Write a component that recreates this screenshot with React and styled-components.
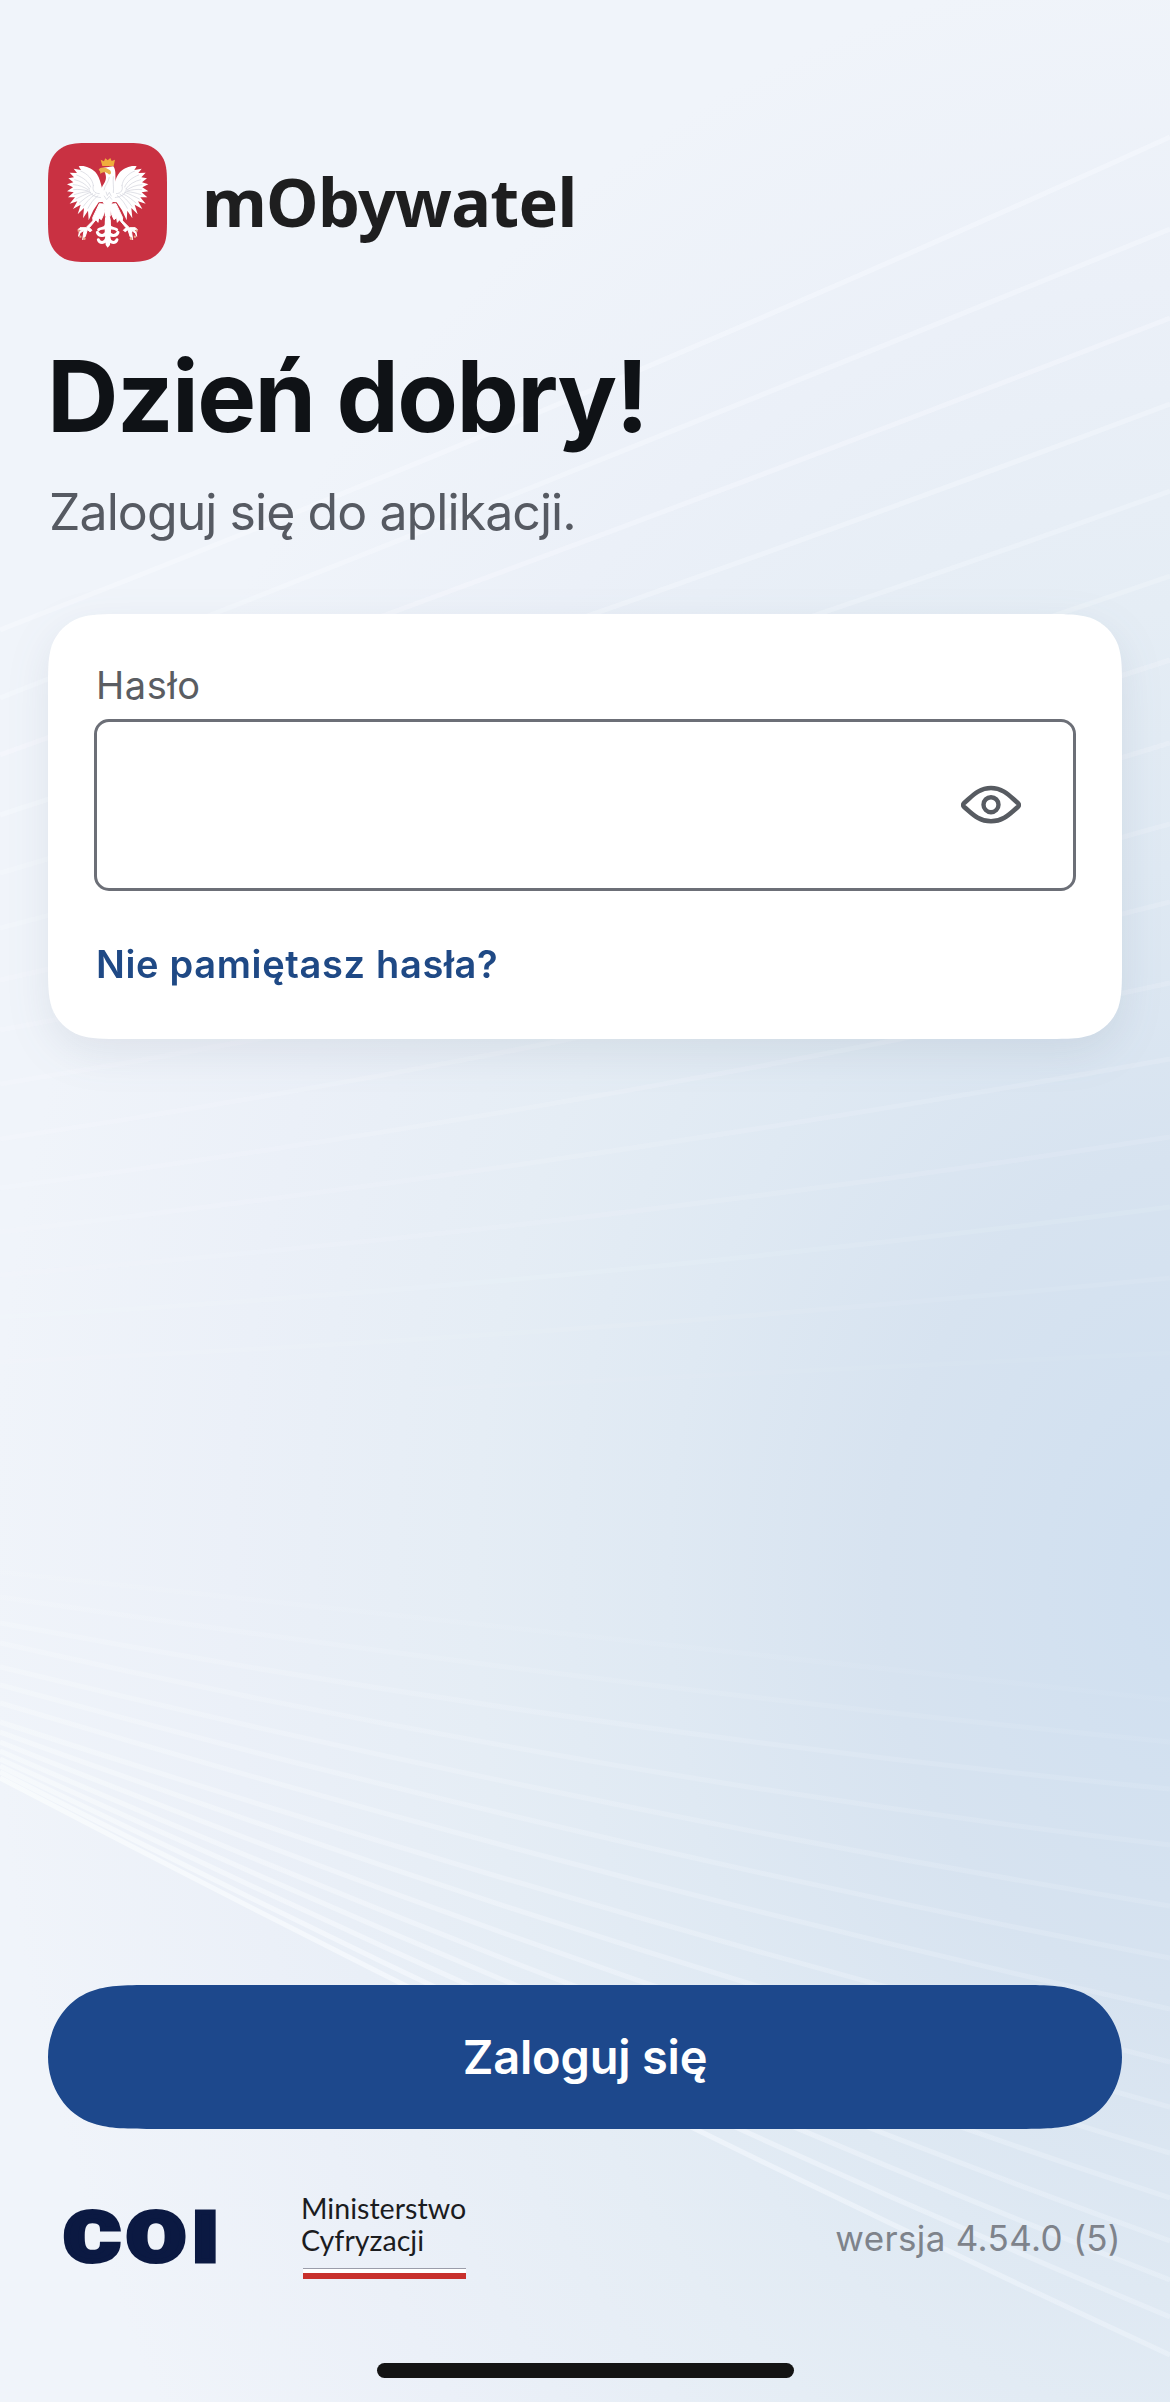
import React, { useState } from "react";
import styled, { createGlobalStyle } from "styled-components";

const GlobalStyle = createGlobalStyle`
  *, *::before, *::after { box-sizing: border-box; }
  body { margin: 0; background: #eef3fa; font-family: Inter, "Liberation Sans", sans-serif; }
`;

const Screen = styled.main`
  position: relative;
  isolation: isolate;
  display: flex;
  flex-direction: column;
  width: 1170px;
  height: 2402px;
  padding: 143px 48px 0;
  overflow: hidden;
  background: radial-gradient(
    1210px 1620px at 1200px 1580px,
    #cfdff0 0%,
    #d7e3f0 26%,
    #dfe9f3 44%,
    #e5edf5 60%,
    #ebf0f8 80%,
    #f0f4fa 100%
  );
`;

const Rays = styled.svg`
  position: absolute;
  inset: 0;
  z-index: -1;
  width: 1170px;
  height: 2402px;
`;

const Brand = styled.header`
  display: flex;
  align-items: center;
  gap: 35px;
  height: 119px;
`;

const Emblem = styled.svg`
  flex: none;
  width: 119px;
  height: 119px;
`;

const BrandName = styled.span`
  font: 700 66.5px/119px "Noto Sans", sans-serif;
  letter-spacing: -0.75px;
  color: #1e1e1f;
  margin-top: -3px;
`;

const Title = styled.h1`
  margin: 74px 0 0 -1px;
  font-size: 99px;
  font-weight: 700;
  line-height: 120px;
  letter-spacing: -1.6px;
  color: #0f1216;
`;

const Subtitle = styled.p`
  margin: 26px 0 0 1px;
  font-size: 50px;
  line-height: 60px;
  letter-spacing: -0.93px;
  color: #565a62;
`;

const CardShadow = styled.div`
  margin-top: 72px;
  filter: drop-shadow(0 14px 20px rgba(70, 85, 110, 0.1));
`;

const Card = styled.form`
  display: flex;
  flex-direction: column;
  height: 425px;
  padding: 48px 46px 0;
  background: #fff;
  clip-path: path("${(() => smoothCard(1074, 425, 50))()}");
`;

const Label = styled.label`
  margin-left: 2px;
  font-size: 38px;
  line-height: 46px;
  letter-spacing: 0.6px;
  color: #5a5d62;
`;

const Field = styled.div`
  display: flex;
  align-items: center;
  height: 172px;
  margin-top: 11px;
  padding: 0 52px 0 36px;
  border: 3px solid #6c6f77;
  border-radius: 15px;
`;

const PasswordInput = styled.input`
  flex: 1;
  min-width: 0;
  height: 100%;
  border: 0;
  outline: 0;
  background: transparent;
  font: 48px Inter, sans-serif;
  color: #0f1216;
`;

const IconButton = styled.button`
  display: flex;
  padding: 0;
  border: 0;
  background: none;
  color: #575b61;
`;

const ForgotLink = styled.a`
  align-self: flex-start;
  margin: 50px 0 0 2px;
  font-size: 38px;
  font-weight: 600;
  line-height: 46px;
  letter-spacing: 0.66px;
  color: #1f4985;
  text-decoration: none;
`;

const LoginButton = styled.button`
  flex: none;
  height: 144px;
  margin-top: auto;
  padding: 0;
  border: 0;
  background: #1d488c;
  clip-path: path("M110,0 H964 C996,0 1012,0 1028.5,5.4 C1056,14 1074,42 1074,72 C1074,102 1056,130 1028.5,138.6 C1012,144 996,144 964,144 H110 C78,144 62,144 45.5,138.6 C18,130 0,102 0,72 C0,42 18,14 45.5,5.4 C62,0 78,0 110,0 Z");
  font: 600 47px/56px Inter, sans-serif;
  letter-spacing: -0.2px;
  color: #fff;
`;

const Footer = styled.footer`
  display: flex;
  align-items: flex-start;
  height: 234px;
  padding-top: 62px;
`;

const CoiLogo = styled.span`
  flex: none;
  width: 152px;
  margin: 10px 0 0 16px;
  font: 900 69px/73px Roboto, sans-serif;
  letter-spacing: 5.8px;
  color: #0b1942;
  -webkit-text-stroke: 5px #0b1942;
  transform: scaleX(1.23);
  transform-origin: left center;
`;

const Ministry = styled.div`
  display: flex;
  flex-direction: column;
  margin-left: 85px;
  padding-top: 1px;
  font: 400 28.6px/32px Lato, sans-serif;
  color: #1b1c1f;
`;

const Flag = styled.div`
  width: 163px;
  height: 11px;
  margin: 12px 0 0 2px;
  border-top: 1px solid #9b9daa;
  border-bottom: 6px solid #c8302c;
  background: #fff;
`;

const Version = styled.span`
  margin: 25px 1px 0 auto;
  font-size: 35px;
  line-height: 44px;
  letter-spacing: 0.35px;
  color: #7e838b;
`;

const HomeIndicator = styled.div`
  flex: none;
  align-self: center;
  width: 417px;
  height: 15px;
  margin-bottom: 24px;
  border-radius: 8px;
  background: #141414;
`;

// Rounded rectangle with continuous-curvature corners.
function smoothCard(w, h, r) {
  const a = 1.5287 * r, b = 1.0885 * r, c = 0.8684 * r, d = 0.6315 * r;
  const e = 0.0749 * r, f = 0.3728 * r, g = 0.1691 * r;
  return [
    `M${a},0 H${w - a}`,
    `C${w - b},0 ${w - c},0 ${w - d},${e}`,
    `C${w - f},${g} ${w - g},${f} ${w - e},${d}`,
    `C${w},${c} ${w},${b} ${w},${a}`,
    `V${h - a}`,
    `C${w},${h - b} ${w},${h - c} ${w - e},${h - d}`,
    `C${w - g},${h - f} ${w - f},${h - g} ${w - d},${h - e}`,
    `C${w - c},${h} ${w - b},${h} ${w - a},${h}`,
    `H${a}`,
    `C${b},${h} ${c},${h} ${d},${h - e}`,
    `C${f},${h - g} ${g},${h - f} ${e},${h - d}`,
    `C0,${h - c} 0,${h - b} 0,${h - a}`,
    `V${a}`,
    `C0,${b} 0,${c} ${e},${d}`,
    `C${g},${f} ${f},${g} ${d},${e}`,
    `C${c},0 ${b},0 ${a},0 Z`,
  ].join(" ");
}

// Each ray: height at the left edge, the centre and the right edge, then opacity.
const upperRays = [
  [630, 393, 137, 0.45], [698, 466, 229, 0.42], [755, 541, 318, 0.38],
  [815, 617, 404, 0.34], [873, 692, 491, 0.3], [928, 765, 576, 0.27],
  [980, 836, 660, 0.24], [1030, 905, 743, 0.22], [1084, 972, 824, 0.2],
  [1139, 1036, 902, 0.19], [1188, 1098, 983, 0.18], [1232, 1155, 1059, 0.16],
  [1275, 1217, 1137, 0.14], [1317, 1273, 1207, 0.11], [1362, 1328, 1278, 0.07],
  [1410, 1382, 1353, 0.04],
];
const lowerRays = [
  [1572, 1636, 1700, 0.06], [1597, 1677, 1742, 0.11], [1623, 1719, 1789, 0.17],
  [1643, 1760, 1845, 0.19], [1667, 1798, 1906, 0.22], [1685, 1833, 1958, 0.25],
  [1703, 1867, 2009, 0.28], [1722, 1902, 2062, 0.31], [1732, 1932, 2107, 0.35],
  [1742, 1962, 2153, 0.38], [1751, 1990, 2198, 0.4], [1759, 2014, 2241, 0.43],
  [1766, 2037, 2280, 0.47], [1772, 2058, 2317, 0.53], [1778, 2075, 2355, 0.6],
];

const curve = ([l, m, r]) => `M0,${l} Q585,${2 * m - (l + r) / 2} 1170,${r}`;

function Background() {
  return (
    <Rays viewBox="0 0 1170 2402" fill="none" stroke="#f9fbff" aria-hidden="true">
      <defs>
        <linearGradient id="fade" gradientUnits="userSpaceOnUse" x1="0" y1="0" x2="1170" y2="0">
          <stop offset="0" stopColor="#f9fcfd" />
          <stop offset="0.45" stopColor="#f6f9fe" stopOpacity="0.8" />
          <stop offset="1" stopColor="#f2f7fd" stopOpacity="0.5" />
        </linearGradient>
      </defs>
      {upperRays.map((ray) => (
        <path key={ray[0]} d={curve(ray)} strokeWidth="5" opacity={ray[3]} />
      ))}
      {lowerRays.map((ray) => (
        <path key={ray[0]} d={curve(ray)} stroke="url(#fade)" strokeWidth="5" opacity={Math.min(1, ray[3] * 1.4)} />
      ))}
    </Rays>
  );
}

const WING =
  "M222,196 C216,180 212,142 196,125 C182,112 162,104 146,108 L153,119 L131,115 L141,128 L119,127 L132,141 L115,144 L130,156 L111,162 L129,171 L111,183 L131,186 L114,201 L135,201 L119,220 L142,213 L129,236 L152,223 L143,252 L162,233 L159,264 L174,241 L176,270 L190,240 L206,216 L224,214 Z";
const LEG =
  "M208,220 L228,222 L222,250 L214,268 L206,262 L204,276 L198,268 L178,292 L186,300 L180,304 L172,298 L166,318 L158,328 L162,300 L150,308 L146,318 L148,304 L158,297 L144,298 L150,292 L168,292 L196,264 L190,276 L188,262 Z";

function HalfEagle({ flip }) {
  return (
    <g transform={flip ? "translate(466 0) scale(-1 1)" : undefined}>
      <path d={WING} fill="#fff" />
      <g fill="none" stroke="#cbccd6" strokeWidth="1.8" strokeLinecap="round">
        <path d="M152,122 C172,130 188,146 190,166 M140,134 C160,142 176,154 182,170 M134,148 C152,152 168,162 177,174 M130,163 C148,164 162,170 174,178 M131,178 C146,176 160,178 174,182" />
        <path d="M133,193 C148,188 160,185 176,184 M138,206 C150,200 164,192 182,186 M148,218 C158,210 170,198 188,190 M160,228 C168,218 178,204 196,192 M174,234 C180,222 190,206 204,196" />
        <path d="M190,166 C186,178 192,190 208,190 M177,174 C176,188 188,200 214,202" />
      </g>
      <path d={LEG} fill="#fff" stroke="#fff" strokeWidth="3" strokeLinejoin="round" />
      <g fill="#e8a88a">
        <circle cx="146" cy="301" r="3.5" />
        <circle cx="151" cy="319" r="3.5" />
        <circle cx="163" cy="325" r="4" />
      </g>
      <path
        d="M230,282 C226,300 212,290 206,298 M230,304 C224,322 206,316 202,306 M230,324 C224,342 208,338 205,328"
        fill="none"
        stroke="#fff"
        strokeWidth="9"
        strokeLinecap="round"
      />
    </g>
  );
}

function Eagle() {
  return (
    <Emblem viewBox="0 0 357 357" role="img" aria-label="Godło Polski">
      <path d={smoothCard(357, 357, 90)} fill="#c93142" />
      <g transform="translate(-54 -38)">
        <HalfEagle />
        <HalfEagle flip />
        <path d="M220,112 L250,108 C260,122 254,140 258,160 C264,186 252,214 242,224 L243,300 L240,344 L233,352 L227,344 L224,300 L225,224 C212,212 206,186 218,166 C228,152 230,142 226,130 Z" fill="#fff" />
        <path d="M225,258 L220,276 M241,258 L246,276" stroke="#c93142" strokeWidth="3" />
        <path d="M238,140 C236,156 224,164 222,180 M250,138 C248,158 252,170 250,188 M228,184 L232,196 L238,186 L244,198 M222,196 L230,208 L238,198 L246,208" fill="none" stroke="#cbccd6" strokeWidth="1.8" />
        <path d="M206,118 C212,108 228,110 240,120 C246,128 242,134 236,132 C226,122 218,126 210,130 C212,124 210,122 206,118 Z" fill="#e9b34d" />
        <path d="M217,107 L212,88 L222,93 L226,84 L233,90 L241,83 L245,92 L255,88 L251,107 Z" fill="#f0ad3c" />
      </g>
    </Emblem>
  );
}

function EyeIcon() {
  return (
    <svg width="60" height="40" viewBox="0 0 60 40" fill="none" stroke="currentColor" aria-hidden="true">
      <path d="M3.6,17.6 C10,12.5 17,3 30,3 C43,3 50,12.5 56.4,17.6 C58.4,19.3 58.4,20.7 56.4,22.4 C50,27.5 43,36.3 30,36.3 C17,36.3 10,27.5 3.6,22.4 C1.6,20.7 1.6,19.3 3.6,17.6 Z" strokeWidth="4.6" />
      <circle cx="30" cy="19.7" r="7.5" strokeWidth="4.4" />
    </svg>
  );
}

export default function App() {
  const [visible, setVisible] = useState(false);
  return (
    <>
      <GlobalStyle />
      <Screen>
        <Background />
        <Brand>
          <Eagle />
          <BrandName>mObywatel</BrandName>
        </Brand>
        <Title>Dzień dobry!</Title>
        <Subtitle>Zaloguj się do aplikacji.</Subtitle>
        <CardShadow>
          <Card onSubmit={(e) => e.preventDefault()}>
            <Label htmlFor="password">Hasło</Label>
            <Field>
              <PasswordInput id="password" type={visible ? "text" : "password"} />
              <IconButton type="button" aria-label="Pokaż hasło" onClick={() => setVisible(!visible)}>
                <EyeIcon />
              </IconButton>
            </Field>
            <ForgotLink href="#">Nie pamiętasz hasła?</ForgotLink>
          </Card>
        </CardShadow>
        <LoginButton type="button">Zaloguj się</LoginButton>
        <Footer>
          <CoiLogo>COI</CoiLogo>
          <Ministry>
            <span>Ministerstwo</span>
            <span>Cyfryzacji</span>
            <Flag />
          </Ministry>
          <Version>wersja 4.54.0 (5)</Version>
        </Footer>
        <HomeIndicator />
      </Screen>
    </>
  );
}
